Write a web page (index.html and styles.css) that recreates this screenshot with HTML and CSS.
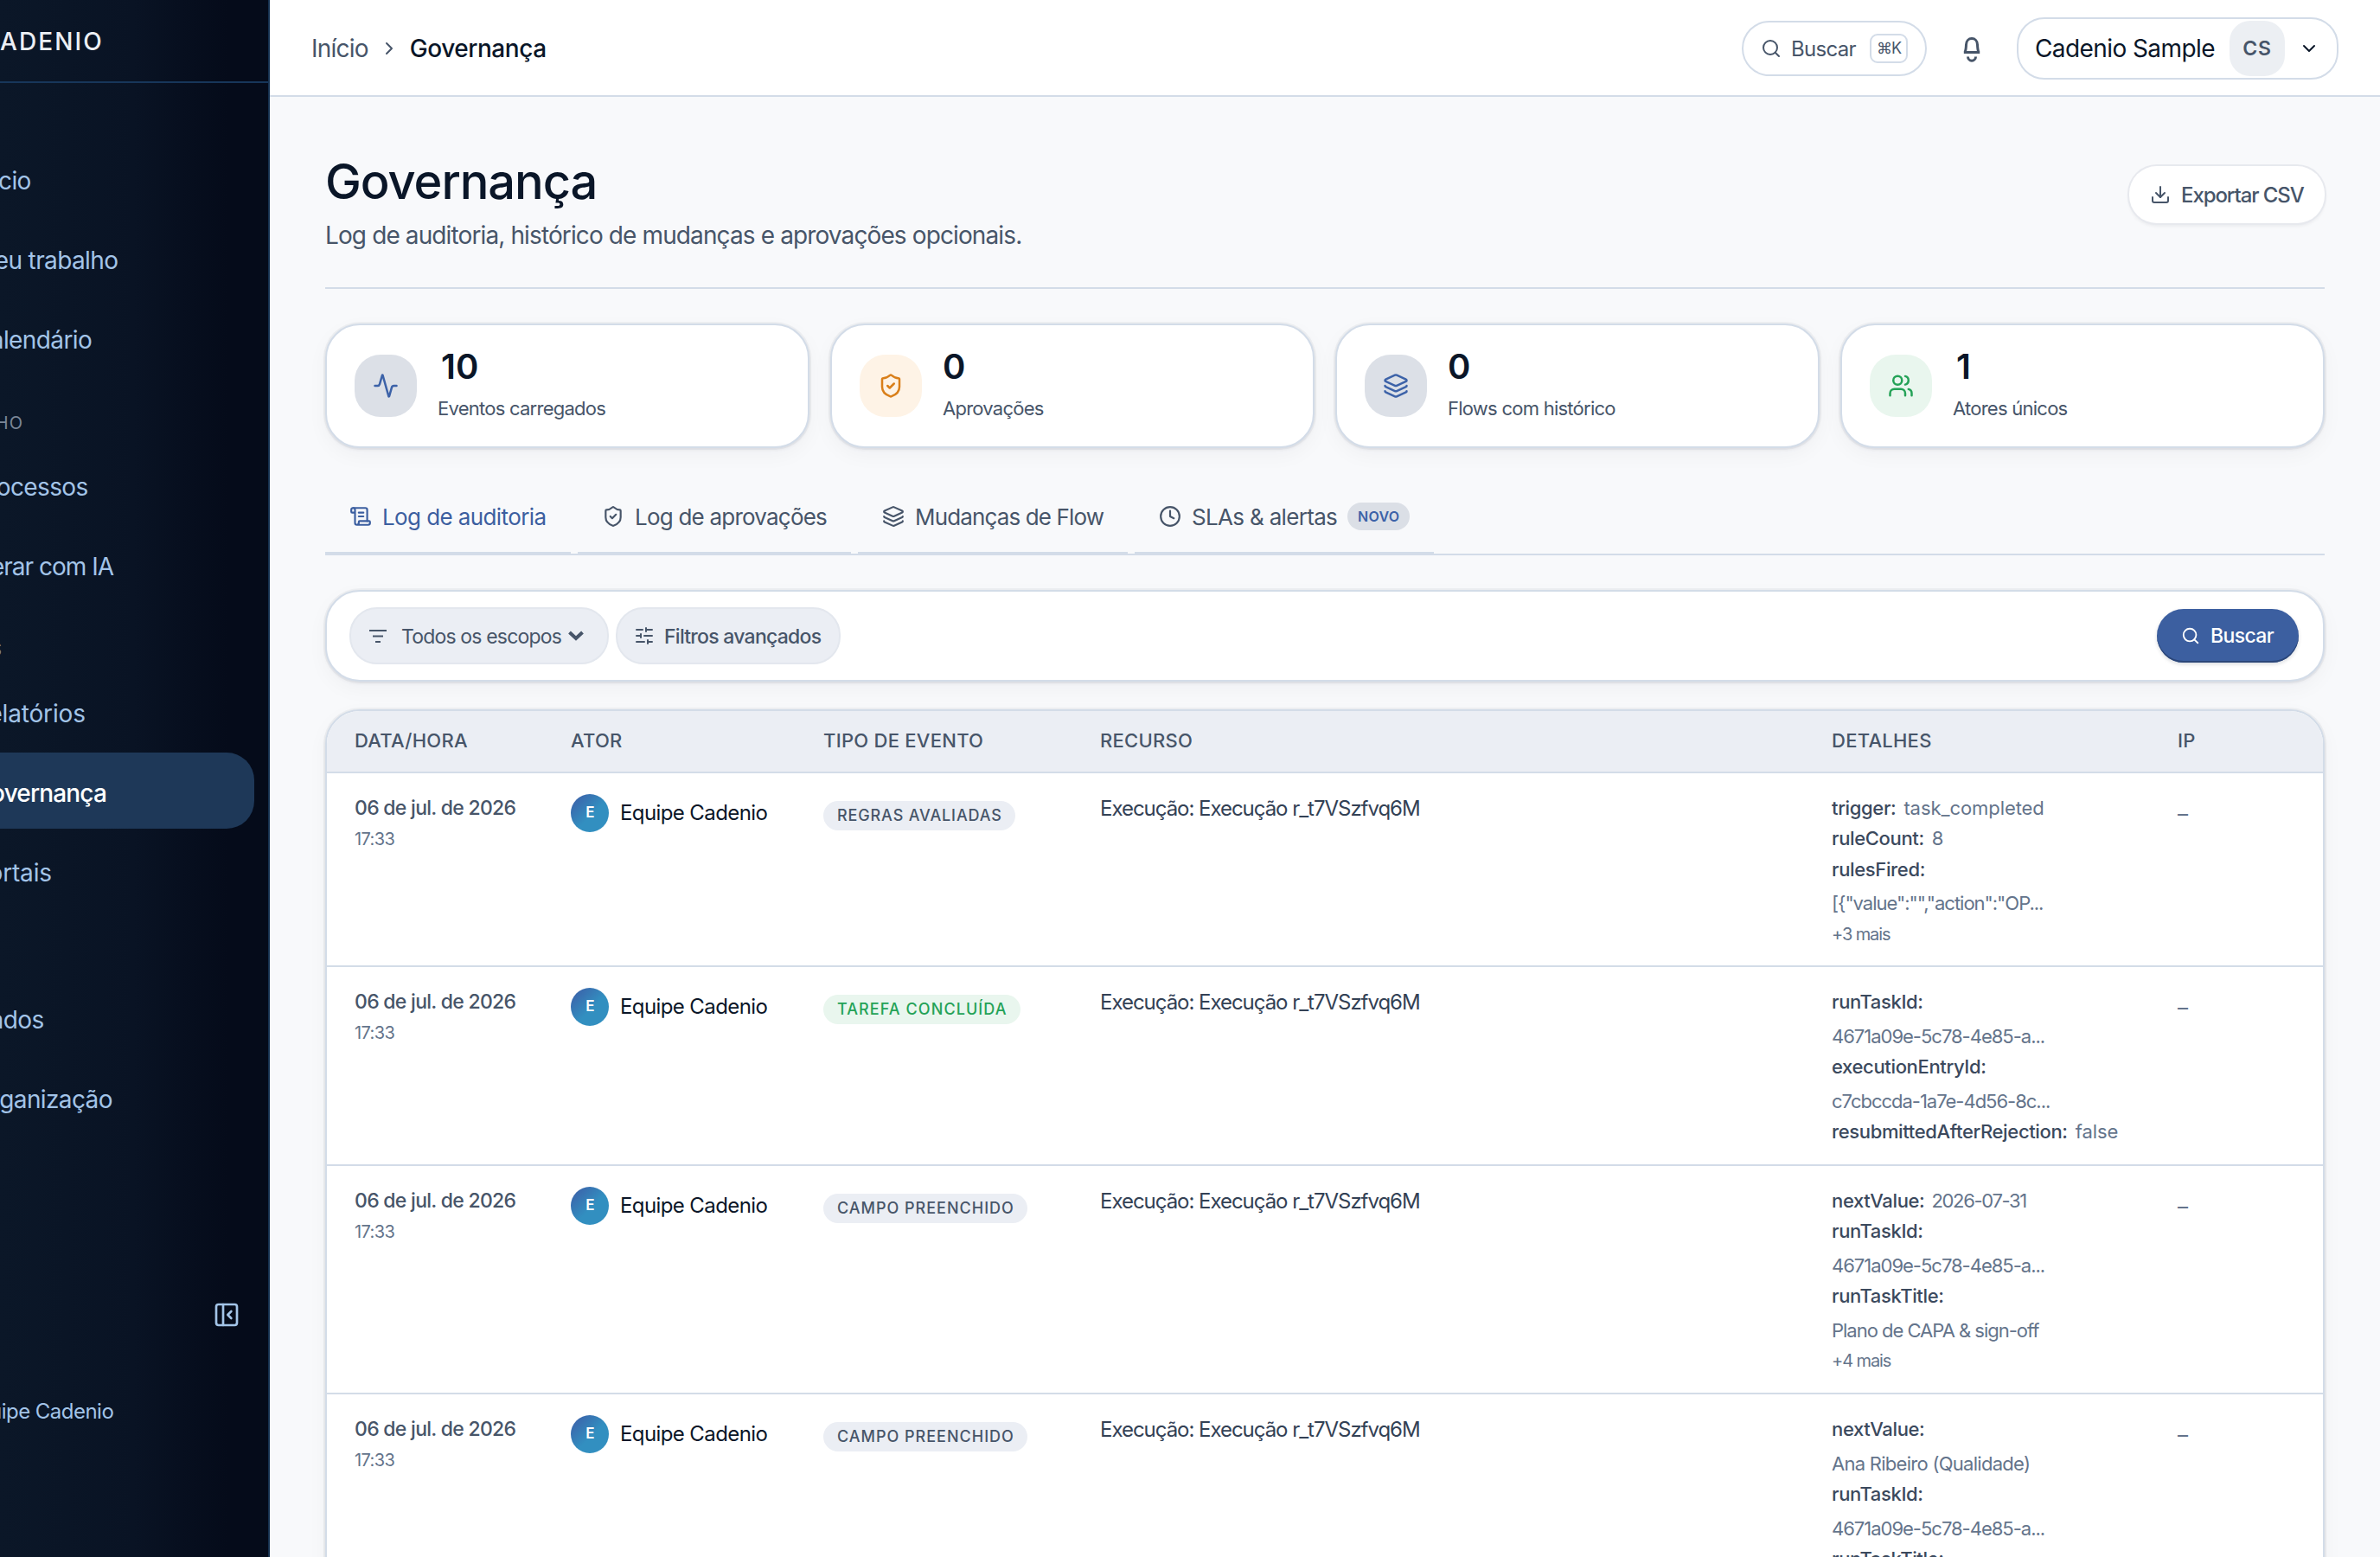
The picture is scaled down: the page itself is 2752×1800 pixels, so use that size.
FILE: index.html
```html
<!DOCTYPE html>
<html lang="pt-BR">
<head>
<meta charset="utf-8">
<title>Governança</title>
<link rel="stylesheet" href="styles.css">
</head>
<body>
<svg class="defs" aria-hidden="true">
  <symbol id="search" viewBox="0 0 24 24"><circle cx="11" cy="11" r="8"/><path d="m21 21-4.3-4.3"/></symbol>
  <symbol id="chev-right" viewBox="0 0 24 24"><path d="m9 18 6-6-6-6"/></symbol>
  <symbol id="chev-down" viewBox="0 0 24 24"><path d="m6 9 6 6 6-6"/></symbol>
  <symbol id="shield" viewBox="0 0 24 24"><path d="M20 13c0 5-3.5 7.5-7.66 8.95a1 1 0 0 1-.67-.01C7.5 20.5 4 18 4 13V6a1 1 0 0 1 1-1c2 0 4.5-1.2 6.24-2.72a1.17 1.17 0 0 1 1.52 0C14.51 3.81 17 5 19 5a1 1 0 0 1 1 1z"/><path d="m9 12 2 2 4-4"/></symbol>
  <symbol id="layers" viewBox="0 0 24 24"><path d="M12.83 2.18a2 2 0 0 0-1.66 0L2.6 6.08a1 1 0 0 0 0 1.83l8.58 3.91a2 2 0 0 0 1.66 0l8.58-3.9a1 1 0 0 0 0-1.83z"/><path d="M2 12a1 1 0 0 0 .58.91l8.6 3.91a2 2 0 0 0 1.65 0l8.58-3.9A1 1 0 0 0 22 12"/><path d="M2 17a1 1 0 0 0 .58.91l8.6 3.91a2 2 0 0 0 1.65 0l8.58-3.9A1 1 0 0 0 22 17"/></symbol>
</svg>
<div class="shell">
  <aside class="sidebar">
    <div class="brand">CADENIO</div>
    <nav class="nav">
      <a class="nav-item">Início</a>
      <a class="nav-item">Meu trabalho</a>
      <a class="nav-item">Calendário</a>
      <div class="nav-section">TRABALHO</div>
      <a class="nav-item">Processos</a>
      <a class="nav-item tight">Gerar com IA</a>
      <div class="nav-section insights">INSIGHTS</div>
      <a class="nav-item loose">Relatórios</a>
      <a class="nav-item active">Governança</a>
      <a class="nav-item loose">Portais</a>
      <div class="nav-section"></div>
      <a class="nav-item">Dados</a>
      <a class="nav-item">Organização</a>
    </nav>
    <div class="side-foot">
      <svg class="icon i32" viewBox="0 0 24 24"><rect x="3" y="3" width="18" height="18" rx="2"/><path d="M9 3v18"/><path d="m16 15-3-3 3-3"/></svg>
      <div class="side-user">Equipe Cadenio</div>
    </div>
  </aside>

  <div class="content">
    <header class="topbar">
      <div class="crumbs"><span class="crumb">Início</span><svg class="icon i24"><use href="#chev-right"/></svg><span class="crumb current">Governança</span></div>
      <div class="top-actions">
        <button class="search"><svg class="icon i24"><use href="#search"/></svg><span class="search-label">Buscar</span><kbd>⌘K</kbd></button>
        <button class="bell"><svg class="bell-icon" viewBox="0 0 22 29"><path d="M1.8 17.4h18.4M3.2 17C4.3 14.5 4.4 11.5 4.5 8.5 4.7 4.3 7.3 1.6 11 1.6s6.3 2.7 6.5 6.9c.1 3 .2 6 1.3 8.5M6.5 22.5a4.5 4.7 0 0 0 9 0"/></svg></button>
        <button class="account"><span class="account-name">Cadenio Sample</span><span class="initials">CS</span><svg class="icon i24"><use href="#chev-down"/></svg></button>
      </div>
    </header>

    <main class="main">
      <section class="page-head">
        <div>
          <h1>Governança</h1>
          <p>Log de auditoria, histórico de mudanças e aprovações opcionais.</p>
        </div>
        <button class="export"><svg class="icon i24" viewBox="0 0 24 24"><path d="M12 15V3"/><path d="M21 15v4a2 2 0 0 1-2 2H5a2 2 0 0 1-2-2v-4"/><path d="m7 10 5 5 5-5"/></svg>Exportar CSV</button>
      </section>

      <section class="cards">
        <div class="card"><div class="tile blue"><svg class="icon i30" viewBox="0 0 24 24"><path d="M22 12h-2.48a2 2 0 0 0-1.93 1.46l-2.35 8.36a.25.25 0 0 1-.48 0L9.24 2.18a.25.25 0 0 0-.48 0l-2.35 8.36A2 2 0 0 1 4.49 12H2"/></svg></div><div class="stat"><strong class="one">10</strong><span>Eventos carregados</span></div></div>
        <div class="card"><div class="tile orange"><svg class="icon i30"><use href="#shield"/></svg></div><div class="stat"><strong>0</strong><span>Aprovações</span></div></div>
        <div class="card"><div class="tile blue"><svg class="icon i30"><use href="#layers"/></svg></div><div class="stat"><strong>0</strong><span>Flows com histórico</span></div></div>
        <div class="card"><div class="tile green"><svg class="icon i30" viewBox="0 0 24 24"><path d="M16 21v-2a4 4 0 0 0-4-4H6a4 4 0 0 0-4 4v2"/><circle cx="9" cy="7" r="4"/><path d="M22 21v-2a4 4 0 0 0-3-3.87"/><path d="M16 3.13a4 4 0 0 1 0 7.75"/></svg></div><div class="stat"><strong class="one">1</strong><span>Atores únicos</span></div></div>
      </section>

      <div class="tabs">
        <a class="tab tab-audit selected"><svg class="icon i26" viewBox="0 0 24 24"><path d="M15 12h-5"/><path d="M15 8h-5"/><path d="M19 17V5a2 2 0 0 0-2-2H4"/><path d="M8 21h12a2 2 0 0 0 2-2v-1a1 1 0 0 0-1-1H11a1 1 0 0 0-1 1v1a2 2 0 1 1-4 0V5a2 2 0 1 0-4 0v2a1 1 0 0 0 1 1h3"/></svg>Log de auditoria</a>
        <a class="tab tab-approvals"><svg class="icon i26"><use href="#shield"/></svg>Log de aprovações</a>
        <a class="tab tab-flow"><svg class="icon i26"><use href="#layers"/></svg>Mudanças de Flow</a>
        <a class="tab tab-sla"><svg class="icon i26" viewBox="0 0 24 24"><circle cx="12" cy="12" r="10"/><path d="M12 6v6l4 2"/></svg>SLAs &amp; alertas<span class="new">NOVO</span></a>
      </div>

      <div class="filters">
        <button class="pill scope"><svg class="lines" viewBox="0 0 20 16"><path d="M0 2h20M4 8.500h12M7 15h6"/></svg><span>Todos os escopos</span><svg class="caret" viewBox="0 0 18 12"><path d="m1.5 2 7.5 7 7.5-7"/></svg></button>
        <button class="pill advanced"><svg class="icon i24" viewBox="0 0 24 24"><path d="M10 5H3M12 19H3M14 3v4M16 17v4M21 12h-9M21 19h-5M21 5h-7M8 10v4M8 12H3"/></svg><span>Filtros avançados</span></button>
        <button class="submit"><svg class="icon i22"><use href="#search"/></svg>Buscar</button>
      </div>

      <div class="table">
        <div class="row head"><div>DATA/HORA</div><div>ATOR</div><div>TIPO DE EVENTO</div><div>RECURSO</div><div>DETALHES</div><div>IP</div></div>
        <div class="row r1">
          <div class="when"><b>06 de jul. de 2026</b><span>17:33</span></div>
          <div class="actor"><i>E</i>Equipe Cadenio</div>
          <div><span class="badge">REGRAS AVALIADAS</span></div>
          <div class="resource">Execução: Execução r_t7VSzfvq6M</div>
          <div class="details">
            <div><b>trigger:</b><em>task_completed</em></div>
            <div><b>ruleCount:</b><em>8</em></div>
            <div><b>rulesFired:</b></div>
            <div class="val">[{"value":"","action":"OP...</div>
            <div class="more">+3 mais</div>
          </div>
          <div class="ip">–</div>
        </div>
        <div class="row r2">
          <div class="when"><b>06 de jul. de 2026</b><span>17:33</span></div>
          <div class="actor"><i>E</i>Equipe Cadenio</div>
          <div><span class="badge done">TAREFA CONCLUÍDA</span></div>
          <div class="resource">Execução: Execução r_t7VSzfvq6M</div>
          <div class="details">
            <div><b>runTaskId:</b></div>
            <div class="val">4671a09e-5c78-4e85-a...</div>
            <div><b>executionEntryId:</b></div>
            <div class="val">c7cbccda-1a7e-4d56-8c...</div>
            <div><b>resubmittedAfterRejection:</b><em>false</em></div>
          </div>
          <div class="ip">–</div>
        </div>
        <div class="row r3">
          <div class="when"><b>06 de jul. de 2026</b><span>17:33</span></div>
          <div class="actor"><i>E</i>Equipe Cadenio</div>
          <div><span class="badge field">CAMPO PREENCHIDO</span></div>
          <div class="resource">Execução: Execução r_t7VSzfvq6M</div>
          <div class="details">
            <div><b>nextValue:</b><em class="date">2026-07-31</em></div>
            <div><b>runTaskId:</b></div>
            <div class="val">4671a09e-5c78-4e85-a...</div>
            <div><b>runTaskTitle:</b></div>
            <div class="val">Plano de CAPA &amp; sign-off</div>
            <div class="more">+4 mais</div>
          </div>
          <div class="ip">–</div>
        </div>
        <div class="row r4">
          <div class="when"><b>06 de jul. de 2026</b><span>17:33</span></div>
          <div class="actor"><i>E</i>Equipe Cadenio</div>
          <div><span class="badge field">CAMPO PREENCHIDO</span></div>
          <div class="resource">Execução: Execução r_t7VSzfvq6M</div>
          <div class="details">
            <div><b>nextValue:</b></div>
            <div class="val person">Ana Ribeiro (Qualidade)</div>
            <div><b>runTaskId:</b></div>
            <div class="val">4671a09e-5c78-4e85-a...</div>
            <div><b>runTaskTitle:</b></div>
          </div>
          <div class="ip">–</div>
        </div>
      </div>
    </main>
  </div>
</div>
</body>
</html>
```
FILE: styles.css
```css
* { box-sizing: border-box; }
html, body { margin: 0; height: 1800px; overflow: hidden; }
body {
  font-family: Inter, "Liberation Sans", sans-serif;
  font-size: 24px;
  color: #0a1628;
  background: #f8f9fb;
  white-space: nowrap;
}
button { font: inherit; color: inherit; border: 0; background: none; padding: 0; margin: 0; letter-spacing: inherit; }
.defs { display: none; }
.icon { fill: none; stroke: currentColor; stroke-width: 2; stroke-linecap: round; stroke-linejoin: round; flex: none; display: block; }
.i22 { width: 22px; height: 22px; }
.i24 { width: 24px; height: 24px; }
.i26 { width: 26px; height: 26px; }
.i30 { width: 30px; height: 30px; }
.i32 { width: 32px; height: 32px; }

.shell { display: flex; height: 1800px; overflow: hidden; }

/* Sidebar */
.sidebar {
  width: 312px;
  flex: none;
  display: flex;
  flex-direction: column;
  overflow: hidden;
  color: #a3c4e8;
  background: linear-gradient(90deg, #0b1728 0%, #091324 50%, #050b1a 85%);
  border-right: 2px solid #14304f;
}
.brand {
  height: 96px;
  flex: none;
  border-bottom: 2px solid #17365a;
  line-height: 97px;
  font-size: 28px;
  font-weight: 500;
  letter-spacing: .075em;
  color: #eceff4;
  text-indent: -22px;
}
.nav { display: flex; flex-direction: column; gap: 4px; padding: 66px 16px 0 0; }
.nav-item {
  height: 88px;
  margin-left: -60px;
  padding: 4px 0 0 29px;
  line-height: 86px;
  font-size: 28px;
  letter-spacing: -.022em;
}
.nav-item.tight { letter-spacing: -.035em; }
.nav-item.loose { letter-spacing: -.006em; }
.nav-item.active { background: #1e3858; color: #fff; border-radius: 32px; font-weight: 500; letter-spacing: -.03em; }
.nav-section {
  height: 74px;
  padding-top: 38px;
  line-height: 26px;
  margin-left: -89px;
  font-size: 20px;
  letter-spacing: .05em;
  color: #7b8798;
}
.nav-section.insights { margin-left: -99px; }
.side-foot { margin-top: auto; padding-bottom: 152px; display: flex; flex-direction: column; gap: 80px; }
.side-foot .icon { align-self: flex-end; margin-right: 32px; }
.side-user { margin-left: -40px; line-height: 32px; letter-spacing: -.022em; }

/* Top bar */
.content { flex: 1; min-width: 0; }
.topbar {
  height: 112px;
  background: #fff;
  border-bottom: 2px solid #d3dce8;
  padding: 2px 48px 0;
  display: flex;
  align-items: center;
  justify-content: space-between;
}
.crumbs { display: flex; align-items: center; gap: 12px; font-size: 28px; color: #475569; }
.crumb { letter-spacing: -.028em; }
.crumb.current { color: #0a1628; font-weight: 500; letter-spacing: -.016em; }
.top-actions { display: flex; align-items: center; gap: 20px; }
.search {
  height: 64px;
  width: 214px;
  border: 2px solid #d3dce8;
  border-radius: 32px;
  padding: 0 20px;
  display: flex;
  align-items: center;
  color: #475569;
}
.search .icon { margin-right: 11px; }
.search-label { letter-spacing: -.03em; }
kbd {
  margin-left: auto;
  width: 44px;
  height: 34px;
  border: 2px solid #d3dce8;
  border-radius: 9px;
  font: 18px/29px Inter, "DejaVu Sans", sans-serif;
  letter-spacing: -.06em;
  text-align: center;
}
.bell { width: 64px; height: 64px; display: grid; place-items: center; }
.bell-icon { width: 22px; height: 29px; margin-top: 2px; fill: none; stroke: #475569; stroke-width: 3; stroke-linejoin: round; }
.account {
  height: 72px;
  width: 372px;
  border: 2px solid #d3dce8;
  border-radius: 32px;
  display: flex;
  align-items: center;
  padding: 0 20px 0 19px;
  font-size: 28px;
}
.account-name { letter-spacing: -.021em; }
.initials {
  width: 64px;
  height: 64px;
  margin: 0 16px 0 auto;
  border-radius: 24px;
  background: #eceff3;
  color: #475569;
  font-size: 23px;
  font-weight: 600;
  line-height: 64px;
  letter-spacing: .04em;
  text-align: center;
}

/* Page head */
.main { padding: 66px 64px 0; }
.page-head { display: flex; justify-content: space-between; align-items: flex-start; height: 156px; border-bottom: 2px solid #d3dce8; }
h1 { margin: 0; font-size: 56px; line-height: 64px; font-weight: 500; letter-spacing: -.019em; }
.page-head p { margin: 10px 0 0; font-size: 28px; line-height: 40px; letter-spacing: -.0315em; color: #475569; }
.export {
  margin-top: 14px;
  width: 226px;
  height: 66px;
  padding-left: 24px;
  border-radius: 32px;
  background: #fff;
  box-shadow: 0 0 0 2px #e7e9ee, 0 3px 4px rgba(10, 22, 40, .08);
  display: flex;
  align-items: center;
  gap: 12px;
  font-weight: 500;
  letter-spacing: -.045em;
  color: #475569;
}

/* Stat cards */
.cards { display: grid; grid-template-columns: repeat(4, 1fr); gap: 24px; margin-top: 40px; }
.card, .filters, .table {
  background: #fff;
  border: 2px solid #d3dce8;
  border-radius: 40px;
  box-shadow: 0 0 0 2px rgba(10, 22, 40, .04), 0 2px 4px rgba(10, 22, 40, .06), 0 8px 24px rgba(10, 22, 40, .04);
}
.card { height: 144px; padding-left: 32px; display: flex; align-items: center; gap: 24px; }
.tile { width: 72px; height: 72px; border-radius: 30px; display: grid; place-items: center; }
.blue { background: #dce0e7; color: #3c62a8; }
.orange { background: #fef3e6; color: #d97f1a; }
.green { background: #e9f6ee; color: #24a257; }
.stat { display: flex; flex-direction: column; gap: 4px; margin-bottom: 8px; }
.stat strong { font-size: 40px; line-height: 56px; font-weight: 600; }
.stat .one { padding-left: 4px; }
.stat span { font-size: 22px; line-height: 32px; letter-spacing: -.034em; color: #475569; }

/* Tabs */
.tabs { display: flex; gap: 8px; margin-top: 34px; height: 90px; border-bottom: 2px solid #d3dce8; }
.tab {
  height: 88px;
  padding: 4px 0 0 28px;
  border-bottom: 2px solid #d3dce8;
  display: flex;
  align-items: center;
  gap: 12px;
  font-size: 26px;
  letter-spacing: -.03em;
  color: #475569;
}
.tab-audit { width: 284px; letter-spacing: -.023em; }
.tab-approvals { width: 316px; }
.tab-flow { width: 312px; letter-spacing: -.033em; }
.tab-sla { width: 346px; letter-spacing: -.026em; }
.tab.selected { color: #3c5fa0; }
.new {
  width: 72px;
  height: 32px;
  border-radius: 16px;
  background: #dbdfe6;
  color: #3c62a8;
  font-size: 16px;
  font-weight: 600;
  line-height: 32px;
  letter-spacing: .02em;
  text-align: center;
}

/* Filter bar */
.filters { margin-top: 40px; height: 106px; padding: 0 28px 0 26px; display: flex; align-items: center; gap: 8px; }
.pill {
  height: 66px;
  border: 2px solid #e3e7ee;
  border-radius: 32px;
  background: #ebeef4;
  color: #475569;
  font-size: 23px;
  display: flex;
  align-items: center;
}
.pill span { padding-top: 1px; }
.scope { width: 300px; padding-left: 21px; letter-spacing: -.036em; }
.lines { width: 20px; height: 16px; margin-right: 17px; stroke: currentColor; stroke-width: 2; fill: none; }
.caret { width: 18px; height: 12px; margin-left: 8px; stroke: currentColor; stroke-width: 4; fill: none; }
.advanced { width: 260px; padding-left: 19px; gap: 11px; font-weight: 500; letter-spacing: -.032em; }
.submit {
  margin-left: auto;
  width: 164px;
  height: 62px;
  padding-left: 28px;
  border-radius: 31px;
  background: #3c5fa0;
  box-shadow: inset 0 -2px 0 #2b4678, 0 2px 4px rgba(10, 22, 40, .15);
  color: #fff;
  font-size: 23px;
  font-weight: 500;
  letter-spacing: -.027em;
  display: flex;
  align-items: center;
  gap: 12px;
}

/* Audit table */
.table { margin-top: 32px; overflow: hidden; height: 1200px; }
.row {
  display: grid;
  grid-template-columns: 250px 292px 320px 846px 400px 1fr;
  align-items: start;
  padding: 23px 0 0 32px;
  border-bottom: 2px solid #d3dce8;
}
.head {
  height: 72px;
  padding-top: 17px;
  background: #ebeef4;
  font-size: 22px;
  line-height: 34px;
  font-weight: 500;
  letter-spacing: .012em;
  color: #475569;
}
.r1 { height: 224px; }
.r2 { height: 230px; }
.r3 { height: 264px; }
.r4 { height: 300px; }
.when { display: flex; flex-direction: column; }
.when b { font-size: 23px; line-height: 35px; font-weight: 500; letter-spacing: -.031em; color: #475569; }
.when span { font-size: 20px; line-height: 36px; letter-spacing: -.03em; color: #64748b; }
.actor { display: flex; align-items: center; gap: 13px; margin-top: 1px; line-height: 42px; letter-spacing: -.025em; }
.actor i {
  width: 44px;
  height: 44px;
  border-radius: 50%;
  background: linear-gradient(135deg, #3c5fa8 5%, #328fc0 55%);
  color: #fff;
  font-size: 17px;
  font-style: normal;
  font-weight: 600;
  line-height: 43px;
  text-align: center;
}
.badge {
  display: inline-block;
  margin-top: 9px;
  height: 34px;
  padding: 0 15px 0 16px;
  border-radius: 17px;
  background: #ebeef4;
  color: #475569;
  font-size: 18px;
  font-weight: 500;
  line-height: 33px;
  letter-spacing: .048em;
}
.badge.done { background: #e9f6ee; color: #24a257; letter-spacing: .06em; }
.badge.field { letter-spacing: .055em; }
.resource { font-size: 24px; line-height: 35px; letter-spacing: -.043em; color: #334155; }
.details { font-size: 22px; line-height: 35.3px; color: #64748b; }
.details b { font-weight: 500; letter-spacing: -.016em; color: #3b495d; }
.details em { font-style: normal; margin-left: 9px; letter-spacing: -.003em; }
.details .date { letter-spacing: -.06em; margin-left: 8px; }
.val { margin-top: 4.4px; letter-spacing: -.046em; }
.val.person { letter-spacing: -.033em; }
.more { font-size: 20px; letter-spacing: -.055em; }
.ip { padding-top: 6px; line-height: 35px; font-size: 24px; color: #64748b; }
```
